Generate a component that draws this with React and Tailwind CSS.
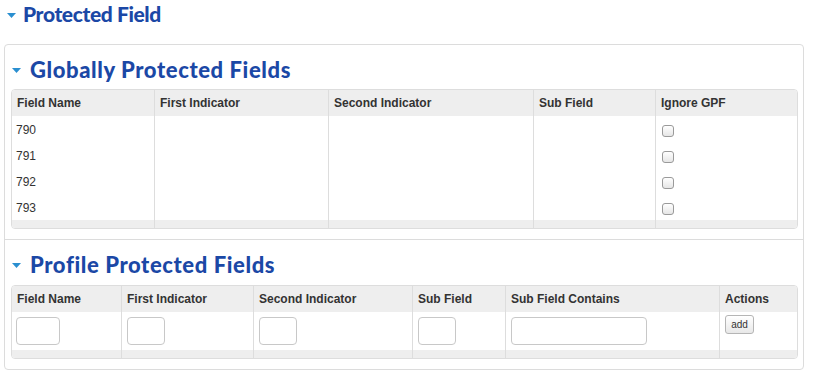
import React from 'react'

const globalCols = [
  { label: 'Field Name', w: 142 },
  { label: 'First Indicator', w: 174 },
  { label: 'Second Indicator', w: 205 },
  { label: 'Sub Field', w: 122 },
  { label: 'Ignore GPF', w: 143 },
]

const profileCols = [
  { label: 'Field Name', w: 109, input: 44 },
  { label: 'First Indicator', w: 132, input: 38 },
  { label: 'Second Indicator', w: 159, input: 38 },
  { label: 'Sub Field', w: 93, input: 38 },
  { label: 'Sub Field Contains', w: 214, input: 136 },
  { label: 'Actions', w: 79 },
]

const fields = ['790', '791', '792', '793']

function Caret({ className = '' }) {
  return (
    <svg width="9" height="5" viewBox="0 0 9 5" className={className}>
      <path d="M0 0 L9 0 L4.5 5 Z" fill="#2a8fd0" />
    </svg>
  )
}

function Heading({ children, big }) {
  return (
    <div className="flex items-center h-[28px]">
      <Caret className={big ? 'mr-[7px] mt-[3px]' : 'mr-[9px] mt-[3px]'} />
      <h2
        className={`font-black text-[#1b48a6] ${big ? 'text-[21px] tracking-[-0.4px]' : 'text-[22px] tracking-[0.6px]'}`}
        style={{ fontFamily: 'Lato, "Open Sans", sans-serif' }}
      >
        {children}
      </h2>
    </div>
  )
}

function Checkbox() {
  return (
    <span className="block w-[12px] h-[12px] rounded-[3px] border border-[#9a9a9a] bg-gradient-to-b from-white to-[#e6e6e6] mt-[4px]" />
  )
}

function HeaderRow({ cols }) {
  return (
    <div className="flex h-[26px] bg-[#eeeeee]">
      {cols.map((c, i) => (
        <div
          key={c.label}
          style={{ width: c.w }}
          className={`shrink-0 flex items-center pl-[5px] font-bold text-[12px] text-[#333] ${i > 0 ? 'border-l border-[#dddddd]' : ''}`}
        >
          {c.label}
        </div>
      ))}
    </div>
  )
}

function FooterStrip({ cols }) {
  return (
    <div className="flex h-[8px] bg-[#eeeeee]">
      {cols.map((c, i) => (
        <div
          key={c.label}
          style={{ width: c.w }}
          className={`shrink-0 ${i > 0 ? 'border-l border-[#dddddd]' : ''}`}
        />
      ))}
    </div>
  )
}

export default function App() {
  return (
    <div className="w-[814px] h-[375px] bg-white overflow-hidden" style={{ fontFamily: '"Liberation Sans", Arial, sans-serif' }}>
      <div className="pl-[7px] pt-0">
        <Heading big>Protected Field</Heading>
      </div>

      <div className="ml-[4px] mt-[16px] w-[800px] border border-[#dcdcdc] rounded-[4px]">
        {/* Globally protected */}
        <div className="pt-[10px] pb-[10px] pl-[6px] pr-[5px]">
          <div className="pl-[1px]">
            <Heading>Globally Protected Fields</Heading>
          </div>
          <div className="mt-[6px] border border-[#dddddd] rounded-[4px] overflow-hidden">
            <HeaderRow cols={globalCols} />
            {fields.map(f => (
              <div key={f} className="flex h-[26px] bg-white">
                {globalCols.map((c, i) => (
                  <div
                    key={c.label}
                    style={{ width: c.w }}
                    className={`shrink-0 flex items-center text-[12px] text-[#333] ${i > 0 ? 'border-l border-[#dddddd]' : ''} ${i === 4 ? 'pl-[6px]' : 'pl-[4px] pt-[1px]'}`}
                  >
                    {i === 0 && f}
                    {i === 4 && <Checkbox />}
                  </div>
                ))}
              </div>
            ))}
            <FooterStrip cols={globalCols} />
          </div>
        </div>

        {/* Profile protected */}
        <div className="border-t border-[#dcdcdc] pt-[10px] pb-[10px] pl-[6px] pr-[5px]">
          <div className="pl-[1px]">
            <Heading>Profile Protected Fields</Heading>
          </div>
          <div className="mt-[7px] border border-[#dddddd] rounded-[4px] overflow-hidden">
            <HeaderRow cols={profileCols} />
            <div className="flex h-[38px] bg-white">
              {profileCols.map((c, i) => (
                <div
                  key={c.label}
                  style={{ width: c.w }}
                  className={`shrink-0 pl-[4px] ${i > 0 ? 'border-l border-[#dddddd] pl-[5px]' : ''} ${c.input ? 'pt-[5px]' : 'pt-[3px]'}`}
                >
                  {c.input ? (
                    <input
                      type="text"
                      style={{ width: c.input }}
                      className="block h-[28px] border border-[#c8c8c8] rounded-[4px] bg-white"
                    />
                  ) : (
                    <button className="block h-[19px] w-[29px] text-[10px] text-[#333] border border-[#b5b5b5] rounded-[3px] bg-gradient-to-b from-white to-[#e8e8e8] leading-none">
                      add
                    </button>
                  )}
                </div>
              ))}
            </div>
            <FooterStrip cols={profileCols} />
          </div>
        </div>
      </div>
    </div>
  )
}
